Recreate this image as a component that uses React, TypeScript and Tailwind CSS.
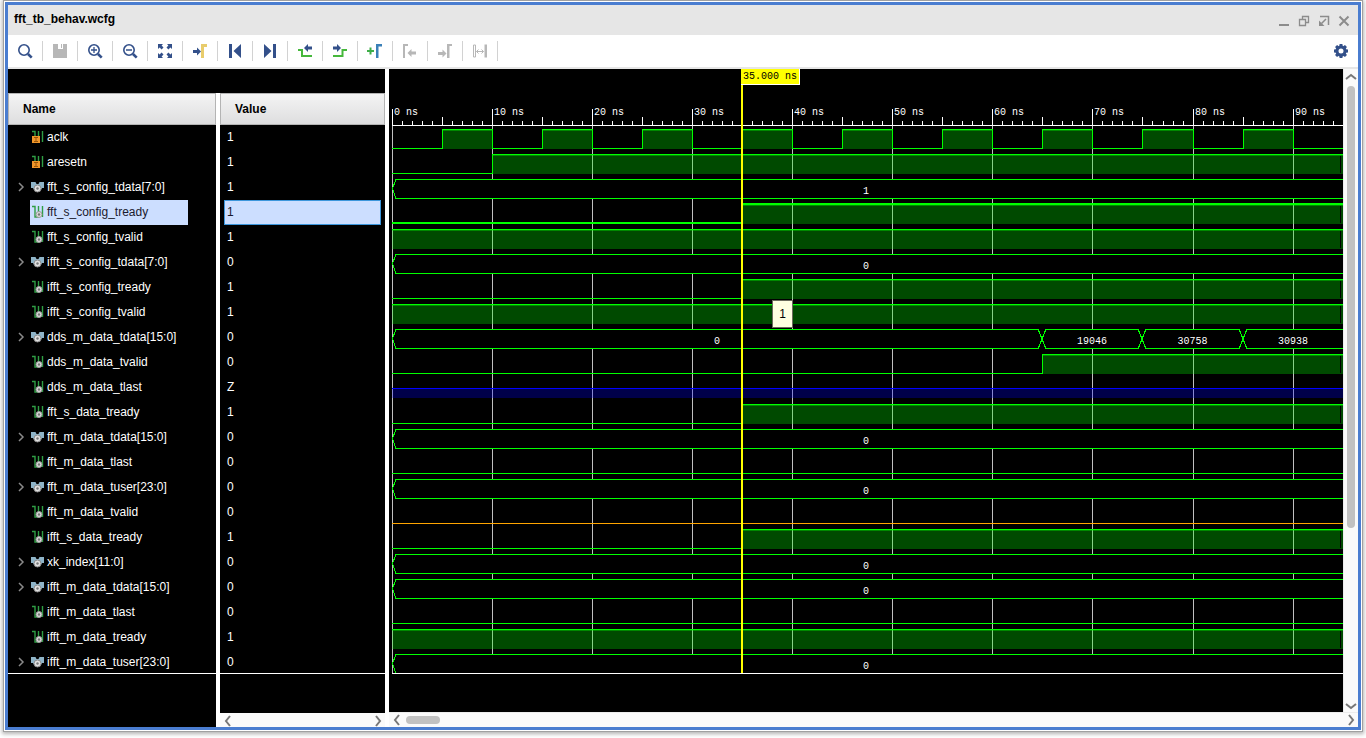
import type { ReactNode } from "react";

type Kind = "input" | "bus" | "wire";
type Segment = { from: number; to?: number; level: "high" | "low" | "z" | "unknown" };
type BusValue = { from: number; to?: number; text: string };
type Signal = {
  name: string;
  value: string;
  kind: Kind;
  selected?: boolean;
  segments?: Segment[];
  bus?: BusValue[];
};

const risesAt = (t: number): Segment[] => [
  { from: 0, to: t, level: "low" },
  { from: t, level: "high" },
];
const always = (level: Segment["level"]): Segment[] => [{ from: 0, level }];
const constant = (text: string): BusValue[] => [{ from: 0, text }];

const clock: Segment[] = Array.from({ length: 20 }, (_, i) => ({
  from: i * 5,
  to: i * 5 + 5,
  level: i % 2 ? "high" : "low",
}));

const signals: Signal[] = [
  { name: "aclk", value: "1", kind: "input", segments: clock },
  { name: "aresetn", value: "1", kind: "input", segments: risesAt(10) },
  { name: "fft_s_config_tdata[7:0]", value: "1", kind: "bus", bus: constant("1") },
  { name: "fft_s_config_tready", value: "1", kind: "wire", selected: true, segments: risesAt(35) },
  { name: "fft_s_config_tvalid", value: "1", kind: "wire", segments: always("high") },
  { name: "ifft_s_config_tdata[7:0]", value: "0", kind: "bus", bus: constant("0") },
  { name: "ifft_s_config_tready", value: "1", kind: "wire", segments: risesAt(35) },
  { name: "ifft_s_config_tvalid", value: "1", kind: "wire", segments: always("high") },
  {
    name: "dds_m_data_tdata[15:0]",
    value: "0",
    kind: "bus",
    bus: [
      { from: 0, to: 65, text: "0" },
      { from: 65, to: 75, text: "19046" },
      { from: 75, to: 85, text: "30758" },
      { from: 85, to: 95, text: "30938" },
    ],
  },
  { name: "dds_m_data_tvalid", value: "0", kind: "wire", segments: risesAt(65) },
  { name: "dds_m_data_tlast", value: "Z", kind: "wire", segments: always("z") },
  { name: "fft_s_data_tready", value: "1", kind: "wire", segments: risesAt(35) },
  { name: "fft_m_data_tdata[15:0]", value: "0", kind: "bus", bus: constant("0") },
  { name: "fft_m_data_tlast", value: "0", kind: "wire", segments: always("low") },
  { name: "fft_m_data_tuser[23:0]", value: "0", kind: "bus", bus: constant("0") },
  { name: "fft_m_data_tvalid", value: "0", kind: "wire", segments: always("unknown") },
  { name: "ifft_s_data_tready", value: "1", kind: "wire", segments: risesAt(35) },
  { name: "xk_index[11:0]", value: "0", kind: "bus", bus: constant("0") },
  { name: "ifft_m_data_tdata[15:0]", value: "0", kind: "bus", bus: constant("0") },
  { name: "ifft_m_data_tlast", value: "0", kind: "wire", segments: always("low") },
  { name: "ifft_m_data_tready", value: "1", kind: "wire", segments: always("high") },
  { name: "ifft_m_data_tuser[23:0]", value: "0", kind: "bus", bus: constant("0") },
];

/* ---------- icons ---------- */

const NAVY = "#33508a";
const GREY = "#b7b7b7";

function Svg({ children, size = 16, crisp = false }: { children: ReactNode; size?: number; crisp?: boolean }) {
  return (
    <svg
      width={size}
      height={size}
      viewBox={`0 0 ${size} ${size}`}
      fill="none"
      aria-hidden="true"
      className="shrink-0"
      shapeRendering={crisp ? "crispEdges" : undefined}
    >
      {children}
    </svg>
  );
}

function Lens({ children }: { children?: ReactNode }) {
  return (
    <Svg>
      <circle cx="7" cy="7" r="5.2" stroke={NAVY} strokeWidth="1.6" />
      <path d="M11 11l3.7 3.7" stroke={NAVY} strokeWidth="2.6" />
      {children}
    </Svg>
  );
}

const tools: { label: string; icon: ReactNode; disabled?: boolean }[] = [
  { label: "Find", icon: <Lens /> },
  {
    label: "Save",
    disabled: true,
    icon: (
      <Svg crisp>
        <path d="M1 1h5v5h5V1h4v14H1z" fill={GREY} />
        <path d="M9 1h1v4H9z" fill={GREY} />
      </Svg>
    ),
  },
  { label: "Zoom in", icon: <Lens><path d="M4 7h6M7 4v6" stroke={NAVY} strokeWidth="1.3" /></Lens> },
  { label: "Zoom out", icon: <Lens><path d="M4 7h6" stroke={NAVY} strokeWidth="1.5" /></Lens> },
  {
    label: "Zoom fit",
    icon: (
      <Svg>
        <path d="M1 1h5L4.6 2.6 6.5 4.6 4.6 6.5 2.6 4.6 1 6zM15 1v5l-1.6-1.4-2 1.9-1.9-1.9 1.9-2L10 1zM1 15v-5l1.6 1.4 2-1.9 1.9 1.9-1.9 2L6 15zM15 15h-5l1.4-1.6-1.9-2 1.9-1.9 2 1.9L15 10z" fill={NAVY} />
      </Svg>
    ),
  },
  {
    label: "Go to cursor",
    icon: (
      <Svg>
        <path d="M1 7h4V4.5L9 8.500 5 12.500V10H1z" fill={NAVY} />
        <path d="M9 15V1h6v3h-3v11z" fill="#e8cc6c" />
      </Svg>
    ),
  },
  {
    label: "Go to start",
    icon: (
      <Svg>
        <path d="M2 1h3v14H2zM14 1v14L6.500 8z" fill={NAVY} />
      </Svg>
    ),
  },
  {
    label: "Go to end",
    icon: (
      <Svg>
        <path d="M11 1h3v14h-3zM2 1v14l7.500-7z" fill={NAVY} />
      </Svg>
    ),
  },
  {
    label: "Previous transition",
    icon: (
      <Svg>
        <path d="M1 7h4v6h10" stroke="#46b83c" strokeWidth="2" />
        <path d="M7 5l4-4v2.500h4v3h-4V9z" fill={NAVY} />
      </Svg>
    ),
  },
  {
    label: "Next transition",
    icon: (
      <Svg>
        <path d="M1 13h9.500V7H15" stroke="#46b83c" strokeWidth="2" />
        <path d="M9 5L5 1v2.500H1v3h4V9z" fill={NAVY} />
      </Svg>
    ),
  },
  {
    label: "Add marker",
    icon: (
      <Svg>
        <path d="M0 8h7M3.500 4.500v7" stroke="#3fae49" strokeWidth="2" />
        <path d="M9 15V1h6v2.500h-3.500V15z" fill="#3a80b8" />
      </Svg>
    ),
  },
  {
    label: "Previous marker",
    disabled: true,
    icon: (
      <Svg>
        <path d="M1 15V1h5v2H3v12z" fill={GREY} />
        <path d="M5.500 10l4-4v2.500H14v3H9.500V14z" fill={GREY} />
      </Svg>
    ),
  },
  {
    label: "Next marker",
    disabled: true,
    icon: (
      <Svg>
        <path d="M10 15V1h5v2h-2.500v12z" fill={GREY} />
        <path d="M9.500 10.500l-4-4V9H1v3h4.500v2.500z" fill={GREY} />
      </Svg>
    ),
  },
  {
    label: "Swap cursors",
    disabled: true,
    icon: (
      <Svg>
        <path d="M1.500 2h2v12h-2z" stroke={GREY} />
        <path d="M12.500 1.500H15v13h-2.500z" fill={GREY} />
        <path d="M4.500 8.500h7M6.500 6.500l-2 2 2 2M9.500 6.500l2 2-2 2" stroke={GREY} />
      </Svg>
    ),
  },
];

function Gear() {
  return (
    <Svg>
      <circle cx="8" cy="8" r="4" stroke={NAVY} strokeWidth="3" />
      {[0, 45, 90, 135, 180, 225, 270, 315].map((a) => (
        <path key={a} d="M6.200 3.500L6.600 1h2.800l.4 2.500z" fill={NAVY} transform={`rotate(${a} 8 8)`} />
      ))}
    </Svg>
  );
}

const windowButtons: { label: string; icon: ReactNode }[] = [
  { label: "Minimize", icon: <path d="M1 10h10" stroke="#8c8c8c" strokeWidth="2" /> },
  {
    label: "Restore",
    icon: <path d="M1.500 4.500h6v6h-6zM4.500 4V1.500h6v6H8" stroke="#8c8c8c" strokeWidth="1.300" />,
  },
  {
    label: "Float",
    icon: (
      <>
        <path d="M2 1.500h8.500V10M3.500 8.500L8 4" stroke="#8c8c8c" strokeWidth="1.500" />
        <path d="M1 11V5.500L6.500 11z" fill="#8c8c8c" />
      </>
    ),
  },
  { label: "Close", icon: <path d="M1.500 1.500l9 9M10.500 1.500l-9 9" stroke="#8c8c8c" strokeWidth="2" /> },
];

function SignalIcon({ kind }: { kind: Kind }) {
  if (kind === "bus") {
    return (
      <Svg size={13}>
        <path d="M0 2h4.500l1 2h2l1-2H13v6h-2l-1 2H3L2 8H0z" fill="#8fb4c8" />
        <circle cx="6.500" cy="8.500" r="3.500" fill="#e0e0e0" stroke="#8a8a8a" />
        <circle cx="6.500" cy="8.500" r="1.200" fill="#777" />
      </Svg>
    );
  }
  return (
    <Svg size={13}>
      <path d="M1 1.500h3V12h3.500V1M11.500 1v11" stroke="#2f9e44" strokeWidth="1.400" />
      {kind === "input" ? (
        <>
          <path d="M1 6h8v7H1z" fill="#f0962a" />
          <path d="M3 7.500h4M5 7.500V11M3 11.500h4" stroke="#9a5608" />
        </>
      ) : (
        <>
          <circle cx="8" cy="9.500" r="3" fill="#dcdcdc" stroke="#9a9a9a" />
          <circle cx="8" cy="9.500" r="1.200" fill="#777" />
        </>
      )}
    </Svg>
  );
}

function Chevron({ dir }: { dir: "left" | "right" | "up" | "down" }) {
  const d = {
    left: "M8 1L4 6l4 5",
    right: "M4 1l4 5-4 5",
    up: "M1 8l5-4 5 4",
    down: "M1 4l5 4 5-4",
  }[dir];
  return (
    <Svg size={12}>
      <path d={d} stroke="#777" strokeWidth="2" />
    </Svg>
  );
}

/* ---------- waveform ---------- */

const ROW = 25;
const RULER_Y = 56;
const GRID_END = 604;
const GREEN = "#00ff00";
const xOf = (ns: number) => 3 + Math.floor(ns * 10.013);
const isBus = (s: Signal) => s.kind === "bus";

function Level({ seg, top, thick }: { seg: Segment; top: number; thick: number }) {
  const x = xOf(seg.from);
  const width = seg.to === undefined ? "100%" : xOf(seg.to) - x + 1;
  const hi = top + 4;
  const lo = top + 23;
  if (seg.level === "low") return <rect x={x} y={lo - thick + 1} width={width} height={thick} fill={GREEN} />;
  if (seg.level === "unknown") return <rect x={x} y={lo} width={width} height="1" fill="#ffa500" />;
  if (seg.level === "z")
    return (
      <>
        <rect x={x} y={top + 13} width={width} height="10" fill="#0000ff" fillOpacity="0.290" />
        <rect x={x} y={top + 13} width={width} height="1" fill="#0000ff" />
      </>
    );
  return (
    <>
      <rect x={x} y={hi} width={width} height="20" fill={GREEN} fillOpacity="0.290" />
      <rect x={x} y={hi} width={width} height="2" fill={GREEN} fillOpacity="0.350" />
      <rect x={x} y={hi - thick + 1} width={width} height={thick} fill={GREEN} />
      {seg.from > 0 && <rect x={x} y={hi} width="1" height="20" fill={GREEN} />}
      {seg.to !== undefined && <rect x={xOf(seg.to)} y={hi} width="1" height="20" fill={GREEN} />}
      {seg.to === undefined && (
        <rect x="100%" y={hi + 2} width="1" height="17" fill="#000" transform="translate(-3 0)" />
      )}
    </>
  );
}

function Bus({ values, top }: { values: BusValue[]; top: number }) {
  const y1 = top + 4;
  const y2 = top + 23;
  const mid = (y1 + y2) / 2;
  return (
    <>
      <rect x="4" y={y1} width="100%" height="20" fill="#000" />
      <rect x="6" y={y1} width="100%" height="1" fill={GREEN} />
      <rect x="6" y={y2} width="100%" height="1" fill={GREEN} />
      {values.map((v) => {
        const x = xOf(v.from);
        return (
          <g key={v.from}>
            {v.from === 0 ? (
              <path d={`M${x + 4} ${y1}L${x + 0.5} ${mid}L${x + 4} ${y2 + 1}`} stroke={GREEN} fill="none" />
            ) : (
              <>
                <rect x={x - 3} y={y1} width="7" height="20" fill="#000" />
                <path
                  d={`M${x - 4} ${y1}L${x + 4} ${y2 + 1}M${x + 4} ${y1}L${x - 4} ${y2 + 1}`}
                  stroke={GREEN}
                  fill="none"
                />
              </>
            )}
            <text
              x={v.to === undefined ? "50%" : (x + xOf(v.to)) / 2}
              y={top + 19}
              fill="#fff"
              textAnchor="middle"
            >
              {v.text}
            </text>
          </g>
        );
      })}
    </>
  );
}

function Waveform() {
  const rowTop = (i: number) => RULER_Y + i * ROW;
  return (
    <svg
      className="block h-[605px] w-full font-['Liberation_Mono',monospace] text-[10px]"
      role="img"
      aria-label="Signal waveforms"
    >
      <g shapeRendering="crispEdges">
        <rect x="3" y={RULER_Y} width="100%" height="1" fill="#fff" />
        {Array.from({ length: 96 }, (_, t) => {
          const h = t % 10 === 0 ? 16 : t % 5 === 0 ? 8 : 4;
          return <rect key={t} x={xOf(t)} y={RULER_Y - h} width="1" height={h} fill="#fff" />;
        })}
        {Array.from({ length: 10 }, (_, i) => (
          <rect key={i} x={xOf(i * 10)} y={RULER_Y + 1} width="1" height={GRID_END - RULER_Y} fill="#c0c0c0" />
        ))}
      </g>
      {Array.from({ length: 10 }, (_, i) => (
        <text key={i} x={xOf(i * 10) + 2} y="46" fill="#fff">
          {i * 10} ns
        </text>
      ))}
      <g shapeRendering="crispEdges">
        {signals.map((s, i) =>
          isBus(s) ? (
            <Bus key={s.name} values={s.bus ?? []} top={rowTop(i)} />
          ) : (
            s.segments?.map((seg) => (
              <Level key={`${s.name}-${seg.from}`} seg={seg} top={rowTop(i)} thick={s.selected ? 2 : 1} />
            ))
          ),
        )}
        <rect x="3" y={GRID_END} width="100%" height="1" fill="#fff" />
        <rect x={xOf(35) - 1} y="0" width="2" height={GRID_END} fill="#ffff00" />
      </g>
    </svg>
  );
}

/* ---------- page ---------- */

const headCell =
  "h-8 border border-[#b4b4b4] bg-linear-to-b from-[#f4f4f4] to-[#dededf] px-[14px] text-left font-bold text-black";

function SignalTable() {
  return (
    <table className="w-full table-fixed border-separate border-spacing-0">
      <colgroup>
        <col className="w-[208px]" />
        <col />
      </colgroup>
      <thead>
        <tr>
          <th className="p-0">
            <div className={`${headCell} flex items-center`}>Name</div>
          </th>
          <th className="border-l-4 border-white p-0">
            <div className={`${headCell} flex items-center`}>Value</div>
          </th>
        </tr>
      </thead>
      <tbody>
        {signals.map((s, i) => {
          const last = i === signals.length - 1;
          const line = last ? "border-b border-b-white" : "";
          const height = last ? "h-[23px]" : "h-[25px]";
          const lift = last ? "" : "pb-[2px]";
          return (
            <tr key={s.name}>
              <td className={`p-0 ${line}`}>
                <div className={`flex items-center pl-[9px] ${height}`}>
                  <div className={`w-[13px] shrink-0 ${lift}`}>
                    {isBus(s) && (
                      <button type="button" aria-label={`Expand ${s.name}`} className="flex">
                        <svg width="8" height="10" viewBox="0 0 8 10" fill="none" aria-hidden="true">
                          <path d="M2 1l4 4-4 4" stroke="#8a8a8a" strokeWidth="1.500" />
                        </svg>
                      </button>
                    )}
                  </div>
                  <div
                    className={`flex h-full w-[158px] items-center gap-[3px] pl-px whitespace-nowrap ${lift} ${
                      s.selected ? "bg-[#ccdeff] text-[#1a1a2e]" : ""
                    }`}
                  >
                    <SignalIcon kind={s.kind} />
                    {s.name}
                  </div>
                </div>
              </td>
              <td className={`border-l-4 border-l-white p-0 ${line}`}>
                <div
                  className={`mx-1 flex items-center border px-[2px] ${height} ${lift} ${
                    s.selected ? "border-[#3c96dc] bg-[#ccdeff] text-[#1a1a2e]" : "border-transparent"
                  }`}
                >
                  {s.value}
                </div>
              </td>
            </tr>
          );
        })}
      </tbody>
    </table>
  );
}

export default function App() {
  return (
    <div className="flex h-screen flex-col bg-white px-[5px] pt-[2px] pb-2 font-['Liberation_Sans',Arial,sans-serif] text-xs text-white">
      <main className="flex min-h-0 flex-1 flex-col border-3 border-[#4a7dd0] bg-white shadow-[0_0_0_1px_#fff,0_0_0_2px_#a0a0a0,0_1px_4px_3px_#b4b4b4]">
        <header className="flex h-[30px] shrink-0 items-center justify-between bg-[#e6e6e6] pr-1 pl-[6px] text-black">
          <h1 className="pb-[2px] font-bold">fft_tb_behav.wcfg</h1>
          <div className="flex pt-[2px]">
            {windowButtons.map((b) => (
              <button key={b.label} type="button" aria-label={b.label} className="flex w-5 justify-center">
                <Svg size={12}>{b.icon}</Svg>
              </button>
            ))}
          </div>
        </header>

        <div className="flex h-[34px] shrink-0 items-center border-b-2 border-[#e6e6e6] bg-white">
          {tools.map((t) => (
            <button
              key={t.label}
              type="button"
              aria-label={t.label}
              disabled={t.disabled}
              className="flex h-5 w-[35px] items-center justify-center border-r border-[#d2d2d2]"
            >
              {t.icon}
            </button>
          ))}
          <button type="button" aria-label="Settings" className="mr-[9px] ml-auto">
            <Gear />
          </button>
        </div>

        <div className="flex min-h-0 flex-1">
          <section className="flex w-[377px] shrink-0 flex-col bg-black">
            <div className="h-6 shrink-0" />
            <SignalTable />
            <div className="flex flex-1">
              <div className="w-[208px]" />
              <div className="flex flex-1 flex-col border-l-4 border-white">
                <div className="flex-1" />
                <div className="flex h-[14px] items-center justify-between bg-[#fafafa] pt-px pr-px pl-[2px]">
                  <Chevron dir="left" />
                  <Chevron dir="right" />
                </div>
              </div>
            </div>
          </section>

          <section className="flex min-w-0 flex-1 flex-col border-l-4 border-white">
            <div className="flex min-h-0 flex-1">
              <div className="relative min-w-0 flex-1 overflow-hidden bg-black">
                <Waveform />
                <div className="absolute top-0 left-[352px] h-4 border-r border-b border-white bg-[#ffff00] px-[2px] font-['Liberation_Mono',monospace] text-[10px] leading-[15px] text-black">
                  35.000 ns
                </div>
                <div
                  role="tooltip"
                  className="absolute top-[231px] left-[383px] flex h-7 w-[21px] items-center justify-center border border-[#6b6b5c] bg-[#ffffe1] text-black"
                >
                  1
                </div>
              </div>
              <div className="flex w-[15px] shrink-0 flex-col items-center border-l border-[#ececec] bg-[#fafafa] pt-[2px]">
                <Chevron dir="up" />
                <div className="flex min-h-0 w-full flex-1 flex-col items-center pt-[3px]">
                  <div className="h-[72%] w-2 rounded-full bg-[#c1c1c1]" />
                </div>
                <Chevron dir="down" />
              </div>
            </div>
            <div className="flex h-[15px] shrink-0 items-center border-t border-[#ececec] bg-[#fafafa] pr-px pl-[2px]">
              <Chevron dir="left" />
              <div className="ml-[3px] h-2 w-[34px] rounded-full bg-[#c1c1c1]" />
              <div className="ml-auto">
                <Chevron dir="right" />
              </div>
            </div>
          </section>
        </div>
      </main>
    </div>
  );
}
